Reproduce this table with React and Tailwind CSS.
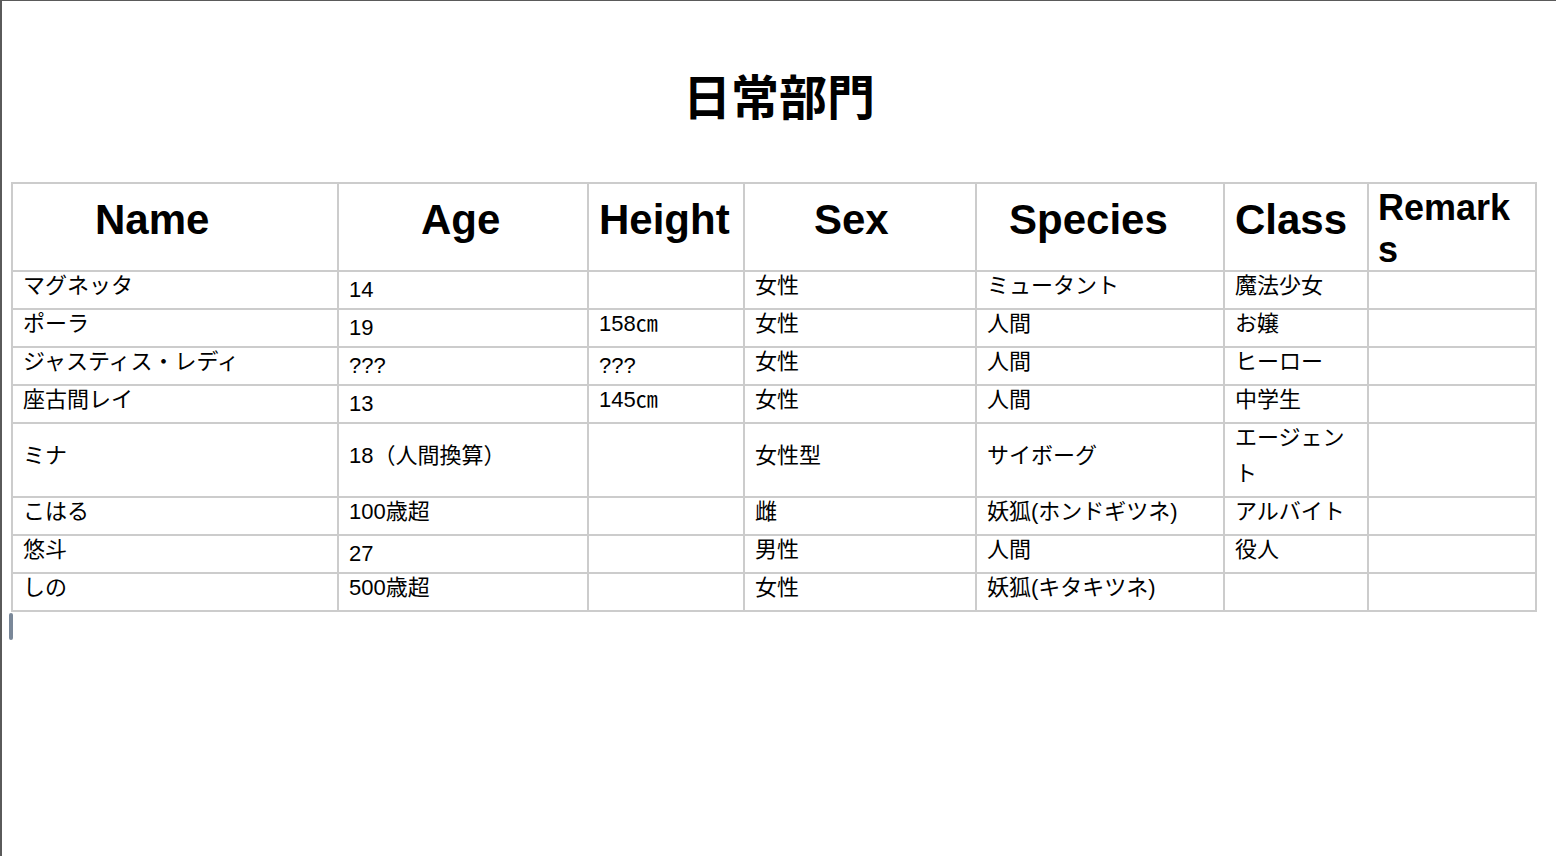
import React from "react"

const headers = [
  { label: "Name", pad: "pl-[82px]" },
  { label: "Age", pad: "pl-[82px]" },
  { label: "Height", pad: "pl-[10px]" },
  { label: "Sex", pad: "pl-[69px]" },
  { label: "Species", pad: "pl-[32px]" },
  { label: "Class", pad: "pl-[10px]" },
]

const rows = [
  ["マグネッタ", "14", "", "女性", "ミュータント", "魔法少女", ""],
  ["ポーラ", "19", "158㎝", "女性", "人間", "お嬢", ""],
  ["ジャスティス・レディ", "???", "???", "女性", "人間", "ヒーロー", ""],
  ["座古間レイ", "13", "145㎝", "女性", "人間", "中学生", ""],
  ["ミナ", "18（人間換算）", "", "女性型", "サイボーグ", "エージェント", ""],
  ["こはる", "100歳超", "", "雌", "妖狐(ホンドギツネ)", "アルバイト", ""],
  ["悠斗", "27", "", "男性", "人間", "役人", ""],
  ["しの", "500歳超", "", "女性", "妖狐(キタキツネ)", "", ""],
]

// plain ascii cells sit a bit lower than the japanese ones
const isLatin = (s) => /^[\x00-\x7f]*$/.test(s)

const Cell = ({ text }) => (
  <div className="flex items-center min-h-[38px] border-r-2 border-b-2 border-[#cccccc] pl-[10px] pr-[10px] text-[22px]">
    {text && (
      <div className="leading-[36px]">
        <span className={isLatin(text) ? "" : "relative -top-[4px]"}>{text}</span>
      </div>
    )}
  </div>
)

export default function App() {
  return (
    <div className="min-h-screen bg-white border-l-2 border-t border-[#5a5a5a] text-black font-['Liberation_Sans','Noto_Sans_CJK_JP',sans-serif]">
      <h1 className="pt-[65px] text-center text-[48px] leading-[56px] font-bold font-['Noto_Sans_CJK_JP',sans-serif]">
        日常部門
      </h1>

      <div className="mt-[60px] ml-[9px] w-[1526px] grid grid-cols-[326px_250px_156px_232px_248px_144px_168px] border-l-2 border-t-2 border-[#cccccc]">
        {/* header row */}
        {headers.map((h) => (
          <div
            key={h.label}
            className={`h-[88px] border-r-2 border-b-2 border-[#cccccc] pt-[12px] ${h.pad} text-[42px] leading-[48px] font-bold`}
          >
            {h.label}
          </div>
        ))}
        <div className="h-[88px] border-r-2 border-b-2 border-[#cccccc] pt-[3px] pl-[9px] pr-[12px] text-[36px] leading-[42px] font-bold break-all">
          Remarks
        </div>

        {rows.map((row, i) =>
          row.map((text, j) => <Cell key={`${i}-${j}`} text={text} />)
        )}
      </div>

      {/* caret */}
      <div className="ml-[7px] mt-px w-[4px] h-[27px] rounded-[2px] bg-[#7a8899]" />
    </div>
  )
}
